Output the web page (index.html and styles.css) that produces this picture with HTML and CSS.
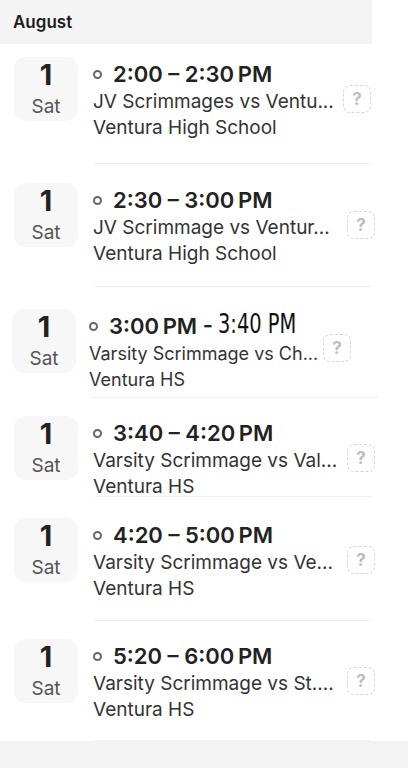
FILE: index.html
```html
<!DOCTYPE html>
<html lang="en">
<head>
    <meta charset="UTF-8">
    <meta name="viewport" content="width=device-width, initial-scale=1.0">
    <title>Schedule</title>
    <link rel="stylesheet" href="styles.css">
</head>
<body>

    <div class="month">August</div>

    <div class="event r1">
        <div class="date"><span class="day">1</span><span class="wd">Sat</span></div>
        <div class="info">
            <div class="time"><span class="dot"></span>2:00 – 2:30&#8239;PM</div>
            <div class="title">JV Scrimmages vs Ventu...</div>
            <div class="place">Ventura High School</div>
        </div>
        <div class="rsvp">?</div>
    </div>
    <div class="sep s1"></div>

    <div class="event r2">
        <div class="date"><span class="day">1</span><span class="wd">Sat</span></div>
        <div class="info">
            <div class="time"><span class="dot"></span>2:30 – 3:00&#8239;PM</div>
            <div class="title">JV Scrimmage vs Ventur...</div>
            <div class="place">Ventura High School</div>
        </div>
        <div class="rsvp">?</div>
    </div>
    <div class="sep s2"></div>

    <div class="event r3">
        <div class="date"><span class="day">1</span><span class="wd">Sat</span></div>
        <div class="info">
            <div class="time"><span class="dot"></span>3:00&#8239;PM -&nbsp;<span class="edited">3:40 PM</span></div>
            <div class="title">Varsity Scrimmage vs Ch...</div>
            <div class="place">Ventura HS</div>
        </div>
        <div class="rsvp">?</div>
    </div>
    <div class="sep s3"></div>

    <div class="event r4">
        <div class="date"><span class="day">1</span><span class="wd">Sat</span></div>
        <div class="info">
            <div class="time"><span class="dot"></span>3:40 – 4:20&#8239;PM</div>
            <div class="title">Varsity Scrimmage vs Val...</div>
            <div class="place">Ventura HS</div>
        </div>
        <div class="rsvp">?</div>
    </div>
    <div class="sep s4"></div>

    <div class="event r5">
        <div class="date"><span class="day">1</span><span class="wd">Sat</span></div>
        <div class="info">
            <div class="time"><span class="dot"></span>4:20 – 5:00&#8239;PM</div>
            <div class="title">Varsity Scrimmage vs Ve...</div>
            <div class="place">Ventura HS</div>
        </div>
        <div class="rsvp">?</div>
    </div>
    <div class="sep s5"></div>

    <div class="event r6">
        <div class="date"><span class="day">1</span><span class="wd">Sat</span></div>
        <div class="info">
            <div class="time"><span class="dot"></span>5:20 – 6:00&#8239;PM</div>
            <div class="title">Varsity Scrimmage vs St....</div>
            <div class="place">Ventura HS</div>
        </div>
        <div class="rsvp">?</div>
    </div>
    <div class="sep s6"></div>

    <div class="footer"></div>

</body>
</html>
```

FILE: styles.css
```css
body {
    margin: 0;
    background: white;
    font-family: Inter, "Liberation Sans", sans-serif;
    color: #222;
    overflow: hidden;
}
.month {
    width: 359px;
    height: 44px;
    line-height: 44px;
    padding-left: 13px;
    background: #f4f4f4;
    font-size: 17px;
    font-weight: 600;
    color: #1c1c1c;
}
.event {
    display: flex;
    align-items: flex-start;
    padding-left: 14px;
    overflow: hidden;
}
.date {
    width: 64px;
    height: 64px;
    flex-shrink: 0;
    border-radius: 12px;
    background: #f7f7f7;
    display: flex;
    flex-direction: column;
    align-items: center;
}
.day {
    font-size: 29px;
    font-weight: 700;
    line-height: 30px;
    margin-top: 3px;
    color: #222;
}
.wd {
    font-size: 19px;
    line-height: 24px;
    margin-top: 5px;
    color: #555;
}
.info {
    margin-left: 15px;
    width: 250px;
}
.time {
    display: flex;
    align-items: center;
    font-size: 22px;
    font-weight: 600;
    line-height: 30px;
    margin-top: 2px;
    white-space: nowrap;
}
.dot {
    width: 5px;
    height: 5px;
    border: 2px solid #666;
    border-radius: 50%;
    margin-right: 11px;
    flex-shrink: 0;
}
.edited {
    display: inline-block;
    font-family: "DejaVu Sans", sans-serif;
    font-weight: 400;
    font-size: 27px;
    color: #111;
    transform: scaleX(0.72);
    transform-origin: left center;
    margin-top: -4px;
}
.title, .place {
    font-size: 19px;
    line-height: 26px;
    color: #333;
    white-space: nowrap;
}
.rsvp {
    width: 26px;
    height: 26px;
    margin-top: 28px;
    border: 1.5px dashed #d6d6d6;
    border-radius: 7px;
    color: #bdbdbd;
    font-weight: 700;
    font-size: 17px;
    line-height: 26px;
    text-align: center;
}
.sep {
    height: 1px;
    margin-left: 95px;
    width: 276px;
    background: #efefef;
}

/* rows come from separate screenshots, so the spacing differs a bit */
.r1 { padding-top: 13px; height: 106px; }
.r2 { padding-top: 19px; height: 103px; }
.r2 .rsvp { margin-left: 4px; }
.r3 { padding-top: 22px; height: 88px; padding-left: 12px; }
.r3 .info { margin-left: 13px; width: 232px; }
.r3 .title, .r3 .place { font-size: 18px; }
.r3 .rsvp { margin-left: 2px; margin-top: 25px; }
.r4 { padding-top: 18px; height: 80px; }
.r4 .rsvp, .r5 .rsvp, .r6 .rsvp { margin-left: 4px; }
.r5 { padding-top: 21px; height: 102px; }
.r6 { padding-top: 18px; height: 101px; }
.s3 { margin-left: 90px; width: 288px; }
.footer {
    height: 40px;
    background: #f3f3f3;
}
```
